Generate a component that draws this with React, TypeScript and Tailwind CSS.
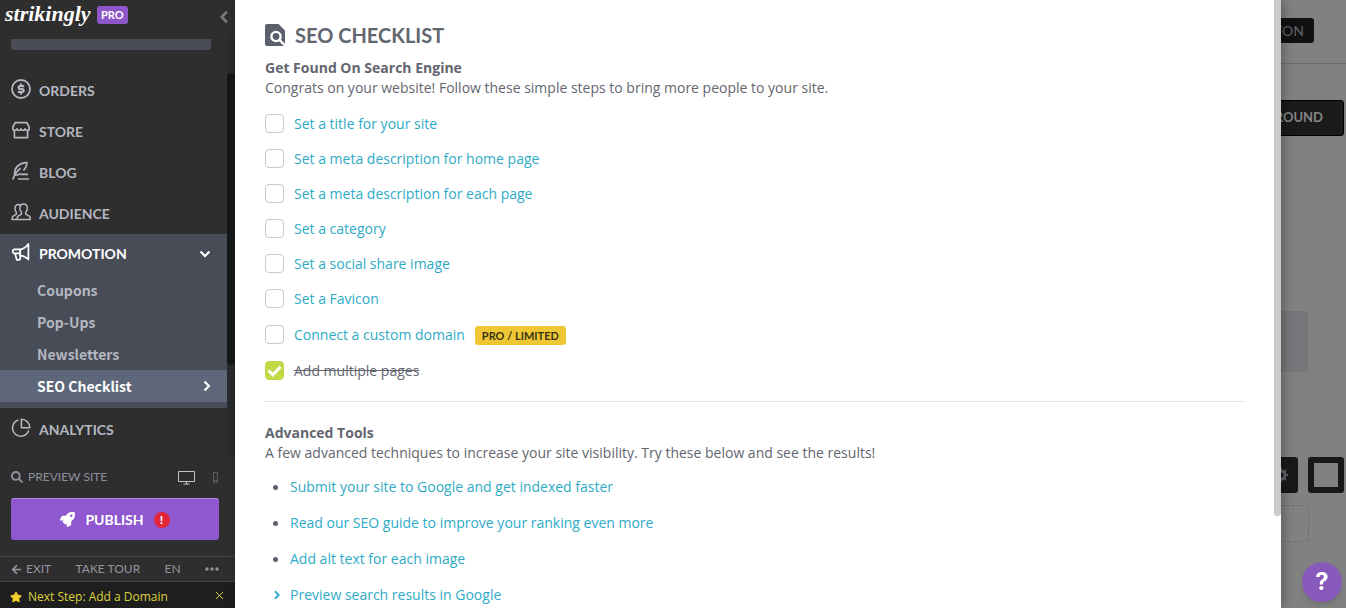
import type { ReactNode } from "react";
import { clsx } from "clsx";
import { FaSearch, FaRocket, FaStar, FaArrowLeft } from "react-icons/fa";

const OrdersIcon = () => (
  <svg viewBox="0 0 20 20" className="mb-1 size-5" fill="none" stroke="currentColor" strokeWidth="1.8">
    <circle cx="10" cy="10" r="9" />
    <path d="M13.200 7.200H9a1.400 1.400 0 0 0 0 2.800h2.200a1.400 1.400 0 0 1 0 2.800H6.800M10 4.400v2.600M10 13v2.600" strokeWidth="2.200" />
  </svg>
);

const StoreIcon = () => (
  <svg viewBox="0 0 20 20" className="mb-1 size-5" fill="none" stroke="currentColor" strokeWidth="1.7" strokeLinejoin="round">
    <path d="M4.200 2.600h11.600l2.400 4.600v1.300c0 1.200-.8 1.900-1.800 1.900s-1.900-.6-2.200-1.500c-.4.9-1.200 1.500-2.100 1.500s-1.800-.6-2.100-1.500c-.3.9-1.200 1.500-2.100 1.500s-1.700-.6-2.100-1.500c-.3.900-1.200 1.500-2.200 1.500S1.800 9.700 1.800 8.500V7.200z" />
    <path d="M3.400 10.600v7h13.200v-7" />
  </svg>
);

const BlogIcon = () => (
  <svg viewBox="0 0 20 20" className="mb-1 size-5" fill="none" stroke="currentColor" strokeWidth="1.7">
    <path d="M1.800 18.400C3 14.600 5.400 10.600 9.600 7.200M3.600 14.200C3 6.800 8 1.800 15.800 1.600c0 3.600-1.400 6-3.400 7.800M3.600 14.200c2.400.2 4.600-.6 6-1.600M9.600 13.400H17M7 18h11" />
  </svg>
);

const AudienceIcon = () => (
  <svg viewBox="0 0 20 20" className="mb-1 size-5" fill="none" stroke="currentColor" strokeWidth="1.5" strokeLinejoin="round">
    <path d="M12.600 2c2.600 0 3.800 1.800 3.700 4.300-.1 2-.7 3.200-1.600 4.300v1.600l4 2.200c.5.800.7 1.900.7 3.200H6c0-1.300.2-2.400.7-3.200l3.800-2.200v-1.600C9.600 9.500 9 8.200 8.900 6.300 8.800 3.800 10 2 12.600 2z" />
    <path d="M9.600 3.200C8.900 2.700 8.200 2.600 7.400 2.600c-2.300 0-3.500 1.500-3.400 3.900.1 1.800.6 3 1.400 4v1.600l-3.600 2.200c-.5.800-.8 1.900-.8 3.300h5" />
  </svg>
);

const PromotionIcon = () => (
  <svg viewBox="0 0 20 20" className="mb-1 size-5" fill="none" stroke="currentColor" strokeWidth="1.7" strokeLinejoin="round">
    <path d="M17.400 2v15.400c-2.400-2.400-5-3.600-8.200-3.800V7.400c3.400-.4 6-2.400 8.200-5.400z" />
    <path d="M9.200 7.400H3.400c-1 0-1.600.6-1.600 1.500v.9c0 1 .6 1.600 1.600 1.600h5.800M4 11.400l1.800 6.400h2.400c.8 0 1-.5 1-1.200V7.400" />
  </svg>
);

const AnalyticsIcon = () => (
  <svg viewBox="0 0 20 20" className="mb-1 size-5" fill="none" stroke="currentColor" strokeWidth="1.6" strokeLinejoin="round">
    <path d="M7.400 2a8.300 8.300 0 1 0 10.300 10.600" />
    <path d="M10.400 1.200v8.600h8.400a8.500 8.500 0 0 0-8.400-8.600z" />
  </svg>
);

const ChevronIcon = ({ className }: { className: string }) => (
  <svg viewBox="0 0 12 12" className={className} fill="none" stroke="currentColor" strokeWidth="2.2">
    <path d="M3.500 1.500 8 6l-4.500 4.500" />
  </svg>
);

interface NavItemProps {
  icon: ReactNode;
  label: string;
  className?: string;
}

const NavItem = ({ icon, label, className }: NavItemProps) => (
  <a href="#" className={clsx("flex items-center gap-2 pl-[11px] font-bold text-[#b4b7c0]", className)}>
    {icon}
    <span>{label}</span>
  </a>
);

const navigationItems = [
  { label: "ORDERS", icon: <OrdersIcon /> },
  { label: "STORE", icon: <StoreIcon /> },
  { label: "BLOG", icon: <BlogIcon /> },
  { label: "AUDIENCE", icon: <AudienceIcon /> },
];

const promotionItems = ["Coupons", "Pop-Ups", "Newsletters", "SEO Checklist"];

const Sidebar = () => (
  <aside className="flex w-[235px] shrink-0 flex-col bg-[#2e2e2e] font-['Lato',sans-serif] text-sm text-[#a1a4ae]">
    {/* Brand */}
    <header className="flex h-[39px] shrink-0 items-start pl-[5px]">
      <a href="#" className="w-[84px] font-['Liberation_Serif',serif] text-[22px] leading-7 font-bold text-white italic">
        strikingly
      </a>
      <span className="mt-1.5 ml-2 rounded-[3px] bg-[#8d56c9] px-1 text-[11px] leading-[18px] font-bold text-white">PRO</span>
      <button aria-label="Collapse sidebar" className="mt-2.5 mr-1 ml-auto">
        <ChevronIcon className="size-[14px] rotate-180 text-[#777a83]" />
      </button>
    </header>

    {/* Menu */}
    <div className="flex min-h-0 flex-1 overflow-hidden">
      <nav className="flex-1">
        <div className="mr-4 mb-5 ml-[11px] h-[11px] rounded-b-[3px] bg-[#4a4d58]" />
        {navigationItems.map((item) => (
          <NavItem key={item.label} icon={item.icon} label={item.label} className="h-[41px]" />
        ))}
        <div className="bg-[#484c57] pb-1.5">
          <a href="#" className="flex h-10 items-center gap-2 pr-4 pl-[11px] font-bold text-white">
            <PromotionIcon />
            <span>PROMOTION</span>
            <ChevronIcon className="ml-auto size-3 rotate-90" />
          </a>
          <ul className="font-['Noto_Sans_CJK_SC',sans-serif] font-bold">
            {promotionItems.map((label) => (
              <li key={label}>
                <a
                  href="#"
                  className={clsx(
                    "flex h-8 items-center justify-between pr-3.5 pl-[37px]",
                    label === "SEO Checklist" ? "bg-[#5e677a] text-white" : "text-[#b4b7c0]"
                  )}
                >
                  {label}
                  {label === "SEO Checklist" && <ChevronIcon className="size-3" />}
                </a>
              </li>
            ))}
          </ul>
        </div>
        <NavItem icon={<AnalyticsIcon />} label="ANALYTICS" className="h-11" />
      </nav>
      <div className="w-2 bg-[#2a2b2e] pt-[34px]">
        <div className="h-[292px] rounded-full bg-[#15171b]" />
      </div>
    </div>

    {/* Preview and publish */}
    <div className="mb-4 pr-4 pl-[11px]">
      <div className="flex h-[42px] items-center text-xs text-[#8d909a]">
        <a href="#" className="flex items-center gap-[5px]">
          <FaSearch className="size-3" />
          PREVIEW SITE
        </a>
        <button aria-label="Desktop preview" className="ml-auto text-[#c3c5cc]">
          <svg viewBox="0 0 17 15" className="h-[15px] w-[17px]" fill="none" stroke="currentColor">
            <path d="M.5 1.500h16v10H.5zM5.500 14h6M8.500 11.500V14" />
          </svg>
        </button>
        <button aria-label="Mobile preview" className="ml-[17px] text-[#5b5f6c]">
          <svg viewBox="0 0 7 11" className="h-[11px] w-[7px]" fill="none" stroke="currentColor">
            <path d="M1.500.5h4v10h-4zM1.500 8.500h4" />
          </svg>
        </button>
      </div>
      <button className="flex h-[42px] w-full items-center justify-center rounded-[3px] border-t border-[#b18bdf] bg-[#8f58d0] font-bold text-white">
        <FaRocket className="mr-2.5 size-[15px]" />
        PUBLISH
        <span className="ml-2.5 flex size-4 items-center justify-center rounded-full bg-[#e22638] text-xs font-black">!</span>
      </button>
    </div>

    <div className="flex h-[25px] items-center justify-between border-t border-[#44454a] pr-4 pl-[11px] text-xs text-[#9295a0]">
      <a href="#" className="flex items-center gap-1">
        <FaArrowLeft className="size-[11px]" />
        EXIT
      </a>
      <a href="#">TAKE TOUR</a>
      <a href="#">EN</a>
      <button aria-label="More">
        <svg viewBox="0 0 14 4" className="h-1 w-3.5" fill="currentColor">
          <circle cx="2" cy="2" r="1.700" />
          <circle cx="7" cy="2" r="1.700" />
          <circle cx="12" cy="2" r="1.700" />
        </svg>
      </button>
    </div>

    {/* Next step */}
    <div className="flex h-[27px] items-center border-t border-[#44454a] bg-[#1e1e1e] pt-1 pr-[11px] pl-2.5 font-['Open_Sans',sans-serif] text-xs text-[#ded23f]">
      <FaStar className="mr-1.5 size-3 text-[#f4cb2c]" />
      <a href="#">Next Step: Add a Domain</a>
      <button aria-label="Dismiss" className="mb-1 ml-auto">
        <svg viewBox="0 0 9 9" className="size-[9px]" stroke="currentColor">
          <path d="m1 1 7 7M8 1 1 8" />
        </svg>
      </button>
    </div>
  </aside>
);

const checklist = [
  { id: "title", label: "Set a title for your site" },
  { id: "meta-home", label: "Set a meta description for home page" },
  { id: "meta-pages", label: "Set a meta description for each page" },
  { id: "category", label: "Set a category" },
  { id: "social", label: "Set a social share image" },
  { id: "favicon", label: "Set a Favicon" },
  { id: "domain", label: "Connect a custom domain", badge: "PRO / LIMITED" },
  { id: "pages", label: "Add multiple pages", done: true },
];

const advancedLinks = [
  "Submit your site to Google and get indexed faster",
  "Read our SEO guide to improve your ranking even more",
  "Add alt text for each image",
];

const ChecklistPanel = () => (
  <main className="z-10 flex min-w-0 flex-1 overflow-hidden bg-white font-['Open_Sans',sans-serif] text-sm text-[#636670] shadow-[2px_0_10px_rgba(0,0,0,0.3)]">
    <div className="flex-1 pt-[21px] pr-[29px] pl-[30px]">
      <div className="flex h-7 items-center gap-2.5">
        <svg viewBox="0 0 20 22" className="h-[22px] w-5">
          <path d="M2 0h11.500L20 6.500V22H2a2 2 0 0 1-2-2V2a2 2 0 0 1 2-2z" fill="#5c606d" />
          <circle cx="11" cy="12.500" r="4.600" fill="#5c606d" stroke="#fff" strokeWidth="2.400" />
          <path d="m14.200 15.700 6.500 6.500" stroke="#fff" strokeWidth="2.400" />
        </svg>
        <h1 className="font-['Lato',sans-serif] text-xl font-bold">SEO CHECKLIST</h1>
      </div>

      <h2 className="mt-[9px] leading-5 font-bold">Get Found On Search Engine</h2>
      <p className="leading-5">Congrats on your website! Follow these simple steps to bring more people to your site.</p>
      <ul className="mt-2">
        {checklist.map((item) => (
          <li key={item.id} className={clsx("flex items-center", item.badge ? "h-[37px]" : "h-[35px]")}>
            <span className="relative size-[19px]">
              <input
                type="checkbox"
                id={item.id}
                defaultChecked={item.done}
                className="peer block size-[19px] appearance-none rounded-[4px] border border-[#c6c9cf] bg-white checked:border-[#c3d847] checked:bg-[#c3d847]"
              />
              <svg viewBox="0 0 19 19" className="pointer-events-none absolute inset-0 hidden peer-checked:block" fill="none" stroke="#fff" strokeWidth="3">
                <path d="m3.500 9.500 4.300 4.300 7.700-8" />
              </svg>
            </span>
            <label htmlFor={item.id} className="ml-2.5">
              {item.done ? (
                <span className="line-through">{item.label}</span>
              ) : (
                <a href="#" className="text-[#2eabc6]">{item.label}</a>
              )}
            </label>
            {item.badge && (
              <span className="mt-0.5 ml-2.5 rounded-[3px] bg-[#efc634] px-[7px] font-['Lato',sans-serif] text-[11px] leading-[19px] font-bold text-[#3a3312]">
                {item.badge}
              </span>
            )}
          </li>
        ))}
      </ul>

      <hr className="mt-[13px] border-[#e3e4e6]" />

      <h2 className="mt-[21px] leading-5 font-bold">Advanced Tools</h2>
      <p className="leading-5">A few advanced techniques to increase your site visibility. Try these below and see the results!</p>
      <ul className="mt-1.5 text-[#2eabc6]">
        {advancedLinks.map((label) => (
          <li key={label} className="flex h-9 items-center pl-2">
            <span className="mr-3 size-[5px] rounded-full bg-[#5c606d]" />
            <a href="#">{label}</a>
          </li>
        ))}
        <li className="flex h-9 items-center pl-[7px]">
          <ChevronIcon className="mr-2 size-2.5" />
          <a href="#">Preview search results in Google</a>
        </li>
      </ul>
    </div>
    <div className="w-[7px]">
      <div className="h-[516px] rounded-b-full bg-[#cacaca]" />
    </div>
  </main>
);

// Dimmed page editor, mostly covered by the panel
const EditorBackdrop = () => (
  <section className="flex w-[65px] shrink-0 flex-col items-end overflow-hidden bg-[#818181] font-['Lato',sans-serif] text-[#606369]">
    <div className="flex h-16 w-full items-start justify-end border-b border-[#6c6c6c] pt-[18px] pr-8">
      <button className="h-[25px] rounded-[3px] bg-[#111111] px-2.5 text-sm">BUTTON</button>
    </div>
    <button className="mt-9 mr-0.5 h-9 rounded-[3px] border border-black bg-[#1a1a1a] px-5 text-[13px] font-bold text-[#858585]">
      BACKGROUND
    </button>
    <div className="mt-[175px] mr-[38px] h-[61px] w-40 rounded-r-[3px] border border-[#727375] bg-[#76777a]" />
    <div className="mt-[85px] mr-0.5 flex gap-2.5">
      <button aria-label="Settings" className="flex h-9 w-20 items-center justify-end rounded-[3px] bg-[#181818] pr-2.5">
        <svg viewBox="0 0 14 14" className="size-3.5" fill="none" stroke="currentColor" strokeWidth="3">
          <circle cx="7" cy="7" r="4" />
          <path d="M7 0v3M7 11v3M0 7h3M11 7h3M2 2l2 2M10 10l2 2M12 2l-2 2M4 10l-2 2" strokeWidth="2" />
        </svg>
      </button>
      <button aria-label="Layout" className="size-9 rounded-[3px] border-6 border-[#181818] bg-[#818181]" />
    </div>
    <div className="mt-3 mr-[37px] h-[37px] w-40 rounded-[3px] border border-dashed border-[#6c6c6c]" />
  </section>
);

export default function App() {
  return (
    <div className="flex h-screen overflow-hidden">
      <Sidebar />
      <ChecklistPanel />
      <EditorBackdrop />
      <button
        aria-label="Help"
        className="fixed right-1 bottom-1.5 z-20 size-10 rounded-full bg-[#8659ba] font-['Inter',sans-serif] text-2xl font-bold text-white shadow-md"
      >
        ?
      </button>
    </div>
  );
}
